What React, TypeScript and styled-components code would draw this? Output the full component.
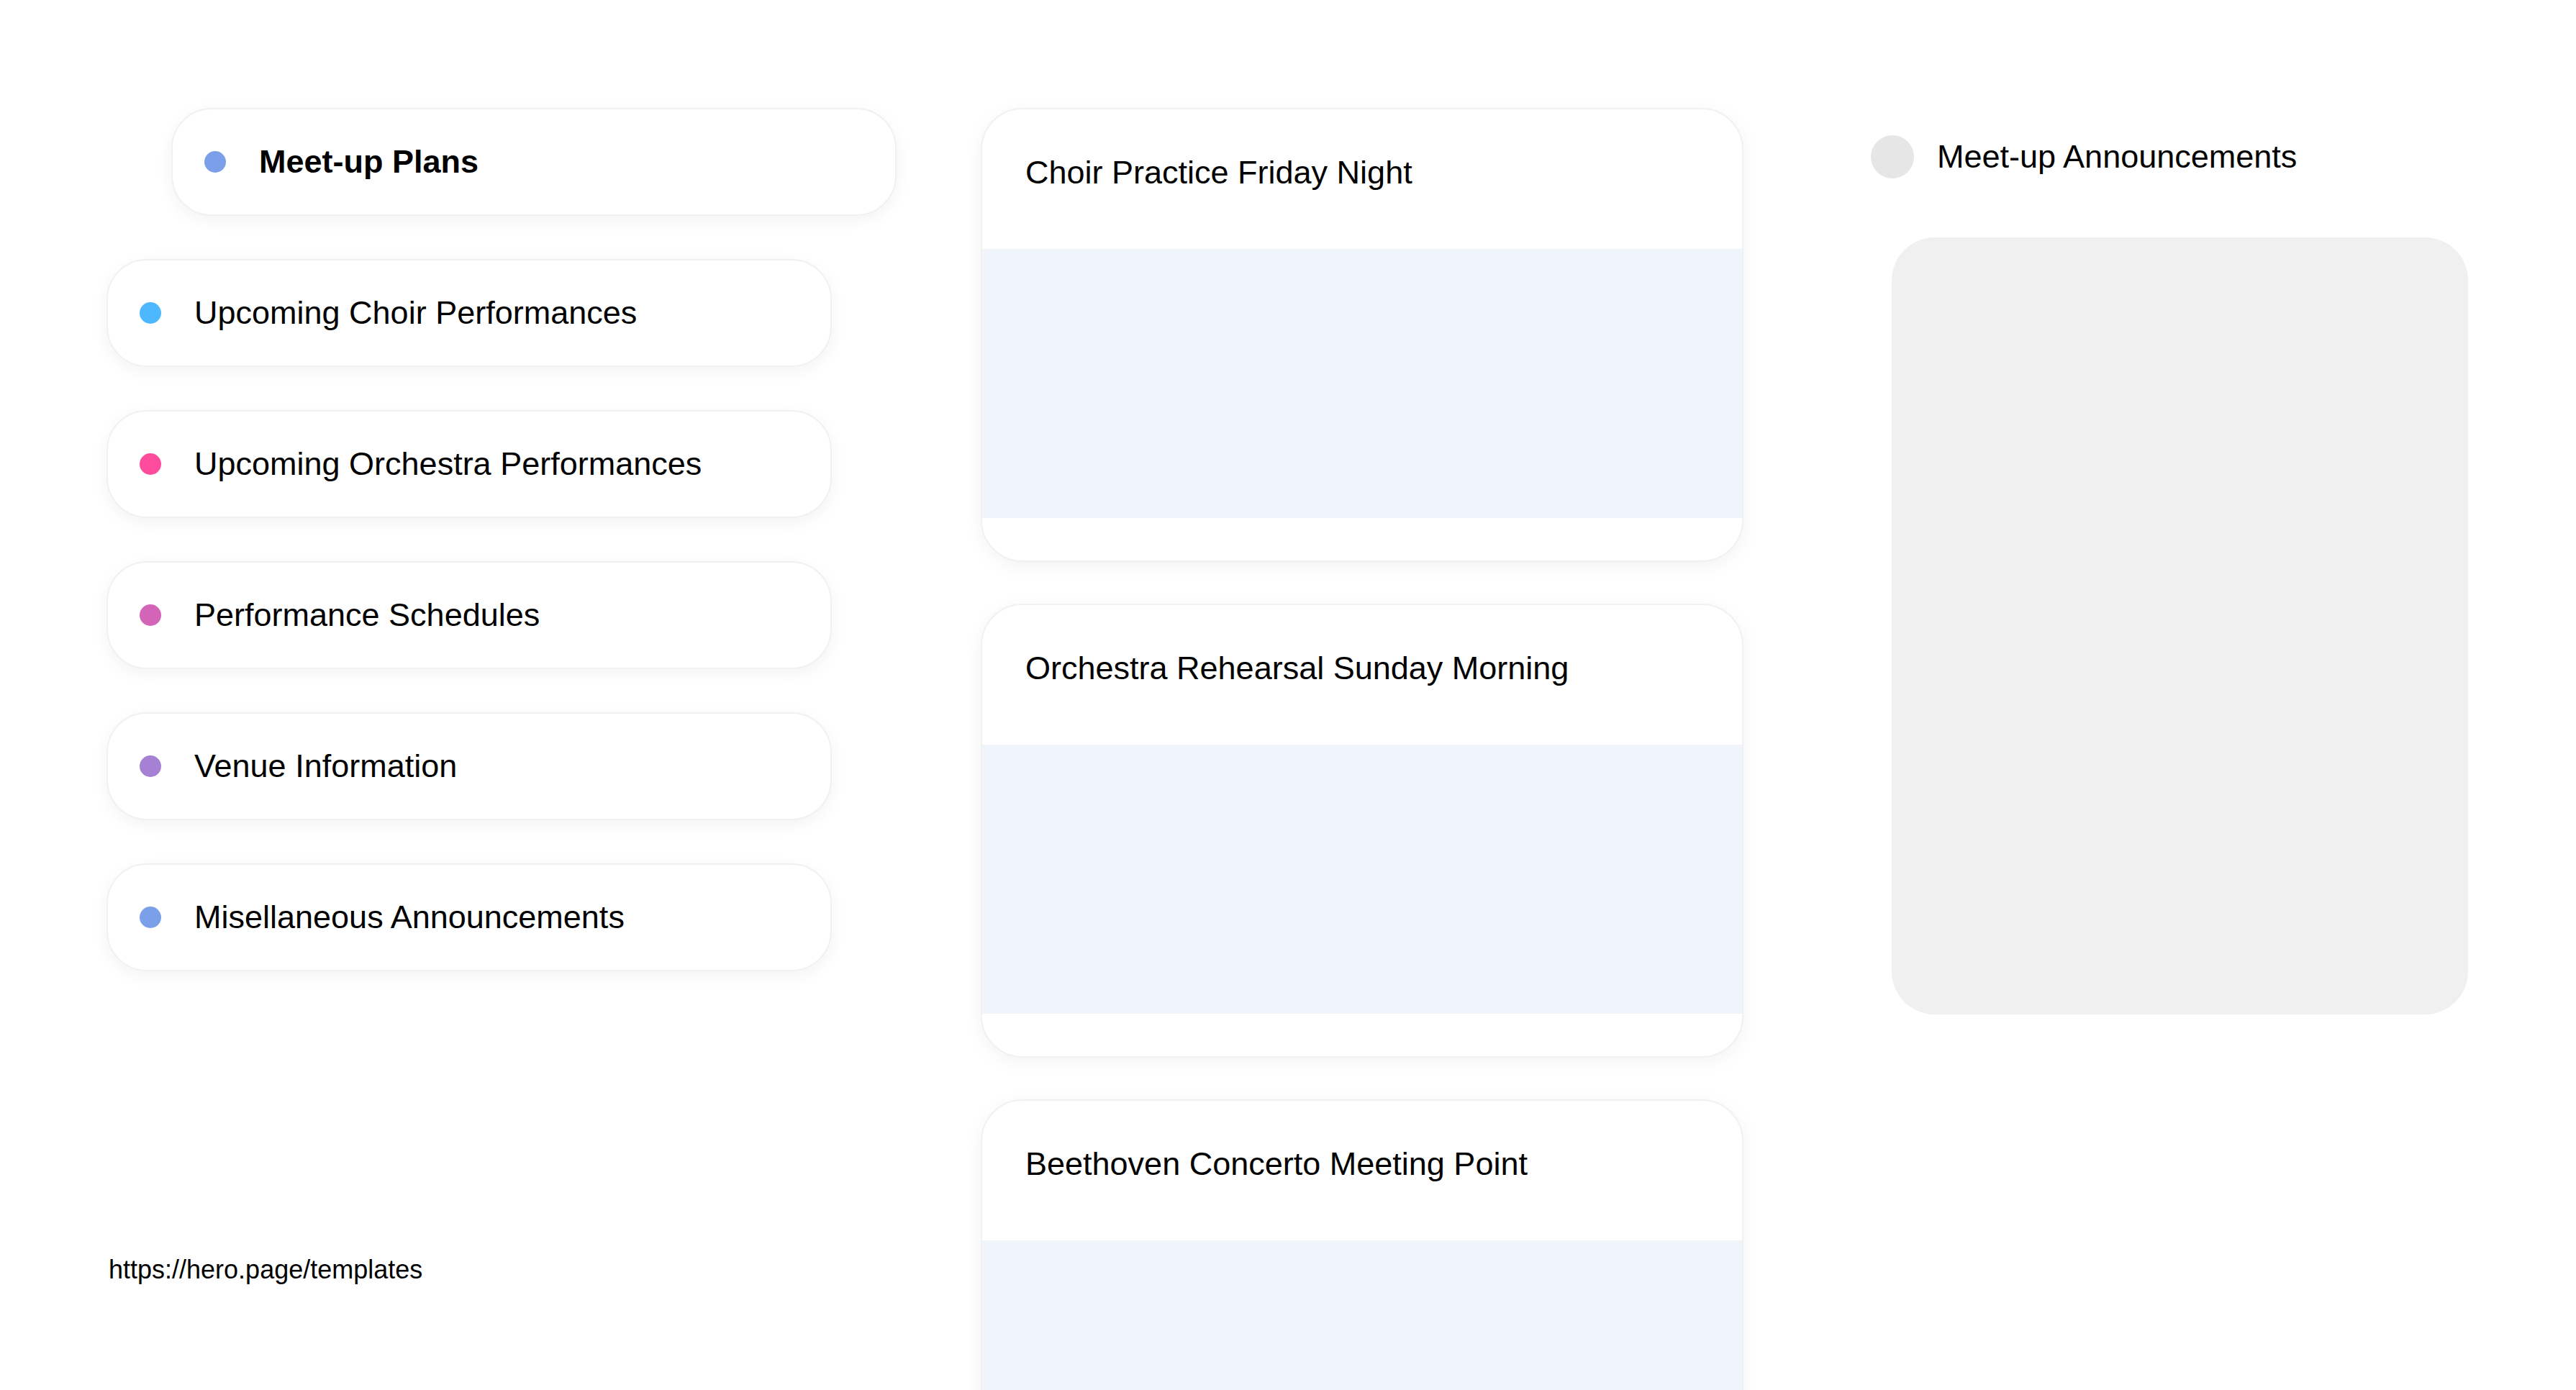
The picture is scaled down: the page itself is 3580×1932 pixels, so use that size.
import styled, { createGlobalStyle } from "styled-components";

const GlobalStyle = createGlobalStyle`
  html, body {
    margin: 0;
    padding: 0;
    background: #ffffff;
    overflow: hidden;
  }
  body {
    font-family: "Liberation Sans", Arial, sans-serif;
    color: #000000;
  }
`;

const Page = styled.div`
  display: flex;
  align-items: flex-start;
  padding: 150px 0 0 148px;
  height: 1932px;
  box-sizing: border-box;
  overflow: hidden;
`;

const LeftColumn = styled.div`
  width: 1098px;
  display: flex;
  flex-direction: column;
  gap: 60px;
  flex-shrink: 0;
`;

const Pill = styled.div<{ $indent?: boolean }>`
  width: 1008px;
  height: 150px;
  box-sizing: border-box;
  margin-left: ${(p) => (p.$indent ? "90px" : "0")};
  display: flex;
  align-items: center;
  gap: 46px;
  padding-left: 44px;
  background: #ffffff;
  border: 2px solid #f1f1f1;
  border-radius: 56px;
  box-shadow: 0 6px 22px rgba(0, 0, 0, 0.05);
`;

const Dot = styled.span<{ $color: string }>`
  width: 30px;
  height: 30px;
  border-radius: 50%;
  flex-shrink: 0;
  background: ${(p) => p.$color};
`;

const PillLabel = styled.span<{ $bold?: boolean }>`
  font-size: 45px;
  font-weight: ${(p) => (p.$bold ? 700 : 400)};
`;

const FooterLink = styled.div`
  margin: 334px 0 0 3px;
  font-size: 36px;
`;

const MiddleColumn = styled.div`
  margin-left: 117px;
  width: 1060px;
  display: flex;
  flex-direction: column;
  gap: 58px;
  flex-shrink: 0;
`;

const Card = styled.div`
  height: 631px;
  box-sizing: border-box;
  display: flex;
  flex-direction: column;
  background: #ffffff;
  border: 2px solid #f1f1f1;
  border-radius: 58px;
  overflow: hidden;
  box-shadow: 0 6px 26px rgba(0, 0, 0, 0.05);
  flex-shrink: 0;
`;

const CardHeader = styled.div`
  height: 194px;
  box-sizing: border-box;
  padding: 62px 0 0 60px;
  font-size: 45px;
`;

const CardBody = styled.div`
  height: 374px;
  background: #f0f5fc;
`;

const RightColumn = styled.div`
  margin-left: 177px;
  padding-top: 38px;
  width: 834px;
  display: flex;
  flex-direction: column;
  gap: 82px;
  flex-shrink: 0;
`;

const RightHeader = styled.div`
  display: flex;
  align-items: center;
  gap: 32px;
  height: 60px;
`;

const GreyCircle = styled.span`
  width: 60px;
  height: 60px;
  border-radius: 50%;
  background: #e6e6e6;
`;

const RightTitle = styled.span`
  font-size: 45px;
`;

const Placeholder = styled.div`
  margin-left: 29px;
  width: 801px;
  height: 1080px;
  background: #f0f0f0;
  border-radius: 60px;
`;

const topics = [
  { label: "Upcoming Choir Performances", color: "#4db8ff" },
  { label: "Upcoming Orchestra Performances", color: "#ff4b9c" },
  { label: "Performance Schedules", color: "#d464b8" },
  { label: "Venue Information", color: "#a680d4" },
  { label: "Misellaneous Announcements", color: "#7b9fe8" },
];

const meetups = [
  "Choir Practice Friday Night",
  "Orchestra Rehearsal Sunday Morning",
  "Beethoven Concerto Meeting Point",
];

export default function App() {
  return (
    <>
      <GlobalStyle />
      <Page>
        <LeftColumn>
          <Pill $indent>
            <Dot $color="#7b9fe8" />
            <PillLabel $bold>Meet-up Plans</PillLabel>
          </Pill>
          {topics.map((t) => (
            <Pill key={t.label}>
              <Dot $color={t.color} />
              <PillLabel>{t.label}</PillLabel>
            </Pill>
          ))}
          <FooterLink>https://hero.page/templates</FooterLink>
        </LeftColumn>

        <MiddleColumn>
          {meetups.map((m) => (
            <Card key={m}>
              <CardHeader>{m}</CardHeader>
              <CardBody />
            </Card>
          ))}
        </MiddleColumn>

        <RightColumn>
          <RightHeader>
            <GreyCircle />
            <RightTitle>Meet-up Announcements</RightTitle>
          </RightHeader>
          <Placeholder />
        </RightColumn>
      </Page>
    </>
  );
}
